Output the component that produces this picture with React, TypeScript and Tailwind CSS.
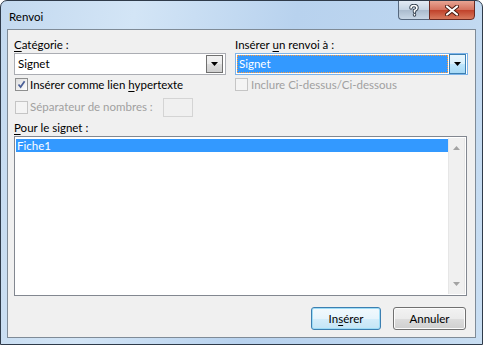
import React from "react";

function Arrow({ up = false, className = "" }: { up?: boolean; className?: string }) {
  return (
    <svg width="7" height="4" viewBox="0 0 7 4" className={className}>
      {up ? <path d="M0 4 L3.5 0 L7 4 Z" fill="currentColor" /> : <path d="M0 0 L7 0 L3.5 4 Z" fill="currentColor" />}
    </svg>
  );
}

function Checkbox({ checked = false, disabled = false }: { checked?: boolean; disabled?: boolean }) {
  return (
    <div
      className={`w-[13px] h-[13px] shrink-0 border flex items-center justify-center ${
        disabled ? "border-[#c5c5c5] bg-[#f4f4f4]" : "border-[#8e8f8f] bg-[linear-gradient(135deg,#dcdcdc,#ffffff)]"
      }`}
    >
      {checked && (
        <svg width="9" height="9" viewBox="0 0 9 9">
          <path d="M1.5 4.5 L3.6 7 L7.6 1.2" stroke="#4a5f97" strokeWidth="1.7" fill="none" />
        </svg>
      )}
    </div>
  );
}

export default function App() {
  return (
    <div
      className="w-[483px] h-[345px] flex flex-col rounded-t-[7px] border border-[#2f3b4a] bg-[linear-gradient(100deg,#c3d9ef_0%,#d3e5f6_25%,#b8d2ee_55%,#bdd6f0_80%,#c9def2_100%)] text-[11.5px] text-black overflow-hidden whitespace-nowrap"
      style={{ fontFamily: 'Lato, "Liberation Sans", sans-serif' }}
    >
      {/* Title bar */}
      <div className="h-[28px] shrink-0 flex items-start justify-between pl-[8px] pr-[7px]">
        <span className="mt-[7px]">Renvoi</span>
        <div className="flex -mt-px">
          <div className="w-[31px] h-[20px] rounded-bl-[4px] border border-[#56687e] border-r-0 bg-[linear-gradient(#e3ebf4,#c5d3e2_50%,#aabbcd_51%,#c8d7e6)] flex items-center justify-center">
            <svg width="10" height="13" viewBox="0 0 10 13">
              <path d="M2 4 Q2 1.5 5 1.5 Q8 1.5 8 4 Q8 5.5 5.5 6.5 L5.5 8 M5.5 10.5 L5.5 11" stroke="#33404f" strokeWidth="3.4" fill="none" strokeLinecap="round" />
              <path d="M2 4 Q2 1.5 5 1.5 Q8 1.5 8 4 Q8 5.5 5.5 6.5 L5.5 8 M5.5 10.5 L5.5 11" stroke="#ffffff" strokeWidth="1.6" fill="none" strokeLinecap="round" />
            </svg>
          </div>
          <div className="w-[46px] h-[20px] rounded-br-[4px] border border-[#6b2a22] bg-[linear-gradient(#e8a493,#d4705c_50%,#c0412a_51%,#d87a5e)] flex items-center justify-center">
            <svg width="14" height="11" viewBox="0 0 14 11">
              <path d="M2 1.5 L12 9.5 M12 1.5 L2 9.5" stroke="#4a1a10" strokeWidth="4" strokeLinecap="round" />
              <path d="M2 1.5 L12 9.5 M12 1.5 L2 9.5" stroke="#ffffff" strokeWidth="2.2" strokeLinecap="round" />
            </svg>
          </div>
        </div>
      </div>

      {/* Client area */}
      <div className="mx-[6px] mb-[6px] flex-1 border border-[#7f8b97] bg-[#f0f0f0] pl-[6px] pr-[7px] pt-[6px] flex flex-col">
        <div className="flex gap-[9px]">
          <div className="w-[212px] flex flex-col">
            <div className="h-[17px] leading-[17px]">
              <span className="underline underline-offset-2">C</span>atégorie :
            </div>
            <div className="h-[22px] border border-[#abadb3] bg-white flex items-center justify-between pl-[3px] pr-[2px]">
              <span>Signet</span>
              <div className="w-[17px] h-[18px] border border-[#707070] bg-[linear-gradient(#f2f2f2,#ebebeb_50%,#dddddd_51%,#cfcfcf)] flex items-center justify-center">
                <Arrow className="text-black" />
              </div>
            </div>
          </div>
          <div className="w-[233px] flex flex-col">
            <div className="h-[17px] leading-[17px]">
              Insérer <span className="underline underline-offset-2">u</span>n renvoi à :
            </div>
            <div className="h-[22px] border border-[#7eb4ea] bg-white flex items-center justify-between pl-[1px] pr-px">
              <div className="flex-1 h-[18px] bg-[#3399ff] border border-dotted border-[#ff9a3c] text-white leading-[16px] pl-px mr-px">
                Signet
              </div>
              <div className="w-[17px] h-[20px] border border-[#3c7fb1] bg-[linear-gradient(#eaf6fd,#d9f0fc_50%,#bee6fd_51%,#a7d9f5)] flex items-center justify-center">
                <Arrow className="text-black" />
              </div>
            </div>
          </div>
        </div>

        <div className="flex gap-[9px] mt-px">
          <div className="w-[212px] h-[17px] flex items-center gap-[2px] pl-px">
            <Checkbox checked />
            <span>
              Insérer comme lien <span className="underline underline-offset-2">h</span>ypertexte
            </span>
          </div>
          <div className="w-[233px] h-[17px] flex items-center gap-[3px] text-[#a0a0a0]">
            <Checkbox disabled />
            <span>Inclure Ci-dessus/Ci-dessous</span>
          </div>
        </div>

        <div className="h-[20px] mt-[4px] flex items-center pl-px text-[#a0a0a0]">
          <Checkbox disabled />
          <span className="ml-[2px] w-[133px]">Séparateur de nombres :</span>
          <div className="w-[30px] h-[19px] border border-[#d4d4d4] bg-[#f0f0f0]" />
        </div>

        <div className="h-[17px] leading-[17px] mt-[2px]">
          <span className="underline underline-offset-2">P</span>our le signet :
        </div>

        <div className="h-[160px] mr-[1px] border border-[#828790] bg-white flex p-px">
          <div className="flex-1 pt-px">
            <div className="h-[13px] bg-[#3399ff] text-white leading-[13px] pl-px">Fiche1</div>
          </div>
          <div className="w-[17px] bg-[#f0f0f0] border-l border-r border-[#e6e6e6] flex flex-col items-center justify-between pt-[8px] pb-[8px]">
            <Arrow up className="text-[#a3a3a3]" />
            <Arrow className="text-[#a3a3a3]" />
          </div>
        </div>

        <div className="flex justify-end gap-[12px] mt-[11px] pr-[2px]">
          <div className="w-[70px] h-[23px] rounded-[3px] border border-[#3c7fb1] bg-[linear-gradient(#f2f9fd,#e6f4fc_50%,#d4edfa_51%,#c4e5f6)] shadow-[inset_0_0_0_1px_#9ddcf6] flex items-center justify-center">
            In<span className="underline underline-offset-2">s</span>érer
          </div>
          <div className="w-[73px] h-[23px] rounded-[3px] border border-[#707070] bg-[linear-gradient(#f2f2f2,#ebebeb_50%,#dddddd_51%,#cfcfcf)] shadow-[inset_0_0_0_1px_#fcfcfc] flex items-center justify-center">
            Annuler
          </div>
        </div>
      </div>
    </div>
  );
}
